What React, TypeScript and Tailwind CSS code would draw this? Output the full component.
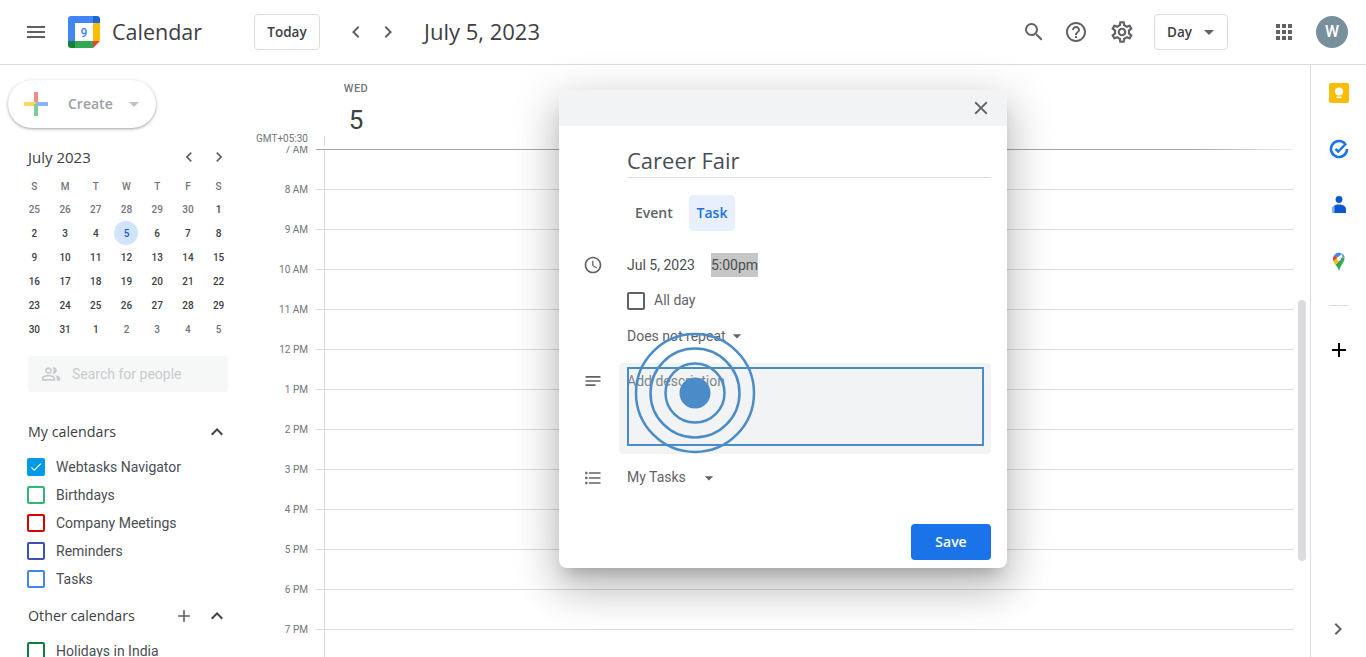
import {
  MdMenu,
  MdSearch,
  MdHelpOutline,
  MdOutlineSettings,
  MdApps,
  MdChevronLeft,
  MdChevronRight,
  MdClose,
  MdAccessTime,
  MdNotes,
  MdFormatListBulleted,
  MdOutlinePeopleAlt,
  MdExpandLess,
  MdAdd,
  MdArrowDropDown,
  MdCheck,
} from "react-icons/md";

const display = "font-['Open_Sans','Liberation_Sans',sans-serif]";

const weeks = [
  ["25", "26", "27", "28", "29", "30", "1"],
  ["2", "3", "4", "5", "6", "7", "8"],
  ["9", "10", "11", "12", "13", "14", "15"],
  ["16", "17", "18", "19", "20", "21", "22"],
  ["23", "24", "25", "26", "27", "28", "29"],
  ["30", "31", "1", "2", "3", "4", "5"],
];

const hours = ["7 AM", "8 AM", "9 AM", "10 AM", "11 AM", "12 PM", "1 PM", "2 PM", "3 PM", "4 PM", "5 PM", "6 PM", "7 PM"];

const myCalendars = [
  { name: "Webtasks Navigator", border: "border-[#039be5] bg-[#039be5]", checked: true },
  { name: "Birthdays", border: "border-[#33b679]", checked: false },
  { name: "Company Meetings", border: "border-[#d50000]", checked: false },
  { name: "Reminders", border: "border-[#3f51b5]", checked: false },
  { name: "Tasks", border: "border-[#4285f4]", checked: false },
];

function CalendarLogo() {
  return (
    <svg width="32" height="32" viewBox="0 0 32 32" className="shrink-0">
      <path d="M3 0H25V7H7V25H0V3a3 3 0 0 1 3-3z" fill="#4285f4" />
      <path d="M25 0h4a3 3 0 0 1 3 3v4h-7z" fill="#1967d2" />
      <rect x="25" y="7" width="7" height="18" fill="#fbbc04" />
      <rect x="7" y="25" width="18" height="7" fill="#34a853" />
      <path d="M0 25h7v7H3a3 3 0 0 1-3-3z" fill="#188038" />
      <path d="M25 25h7l-7 7z" fill="#ea4335" />
      <rect x="7" y="7" width="18" height="18" fill="#fff" />
      <text x="16" y="20.500" textAnchor="middle" fontSize="12" fontWeight="500" fill="#4285f4" fontFamily="Roboto, sans-serif">
        9
      </text>
    </svg>
  );
}

function Header() {
  return (
    <header className="flex h-[65px] items-center border-b border-[#dadce0] bg-white text-[#5f6368]">
      <MdMenu className="ml-6 shrink-0" size={24} />
      <div className="ml-5 shrink-0">
        <CalendarLogo />
      </div>
      <span className={`ml-3 w-[142px] text-[21.500px] text-[#3c4043] ${display}`}>Calendar</span>
      <button className={`flex h-9 w-[66px] items-center justify-center rounded border border-[#dadce0] text-[13.500px] font-semibold text-[#3c4043] ${display}`}>
        Today
      </button>
      <MdChevronLeft className="ml-6" size={24} />
      <MdChevronRight className="ml-2" size={24} />
      <span className={`ml-6 pb-[1px] text-[22px] text-[#3c4043] ${display}`}>July 5, 2023</span>
      <div className="ml-auto flex items-center">
        <MdSearch size={24} />
        <MdHelpOutline className="ml-[18px]" size={24} />
        <MdOutlineSettings className="ml-[21px]" size={26} />
        <button className={`ml-[19px] flex h-9 w-[74px] items-center rounded border border-[#dadce0] pl-3 text-[13.500px] font-semibold text-[#3c4043] ${display}`}>
          Day
          <MdArrowDropDown className="ml-[5px] text-[#5f6368]" size={24} />
        </button>
        <MdApps className="ml-11" size={24} />
        <div className="mr-[18px] ml-5 flex size-8 items-center justify-center rounded-full bg-[#78909c] text-base font-medium text-white">
          W
        </div>
      </div>
    </header>
  );
}

function CheckRow({ name, border, checked }: { name: string; border: string; checked: boolean }) {
  return (
    <div className="flex h-7 items-center pl-[27px]">
      <div className={`flex size-[18px] items-center justify-center rounded-[2px] border-2 ${border}`}>
        {checked && <MdCheck className="text-white" size={16} />}
      </div>
      <span className="ml-[11px] text-sm text-[#4a4e52]">{name}</span>
    </div>
  );
}

function Sidebar() {
  return (
    <aside className="w-[256px] shrink-0 overflow-hidden bg-white">
      <div className="mt-[15px] ml-2 flex h-12 w-[148px] items-center rounded-full bg-white shadow-[0_1px_2px_0_rgba(60,64,67,0.3),0_1px_3px_1px_rgba(60,64,67,0.15)]">
        <svg width="24" height="24" viewBox="0 0 24 24" className="ml-4 shrink-0">
          <rect x="10" y="0" width="4" height="12" fill="#f28b82" />
          <rect x="0" y="10" width="12" height="4" fill="#fdd663" />
          <rect x="12" y="10" width="12" height="4" fill="#8ab4f8" />
          <rect x="10" y="12" width="4" height="12" fill="#81c995" />
        </svg>
        <span className={`ml-5 w-[54px] pb-[1px] text-[14px] font-semibold text-[#9aa0a6] ${display}`}>Create</span>
        <MdArrowDropDown className="text-[#bdc1c6]" size={24} />
      </div>

      <div className="mt-[17px] flex h-6 items-center pr-[27px] pl-7 text-[#3c4043]">
        <span className={`text-[15px] ${display}`}>July 2023</span>
        <MdChevronLeft className="ml-auto text-[#5f6368]" size={20} />
        <MdChevronRight className="ml-[10px] text-[#5f6368]" size={20} />
      </div>

      <div className="mt-[6px] grid w-[234px] grid-cols-7 pl-[19px] text-center text-[10px] font-medium text-[#70757a]">
        {["S", "M", "T", "W", "T", "F", "S"].map((d, i) => (
          <div key={i} className="h-[22px] leading-[23px]">
            {d}
          </div>
        ))}
      </div>
      <div className="grid w-[234px] grid-cols-7 pl-[19px] text-center text-[10px] font-medium">
        {weeks.flat().map((d, i) => {
          const muted = i < 6 || i > 37;
          const today = i === 10;
          return (
            <div key={i} className="flex h-6 items-center justify-center">
              <span
                className={`flex size-6 items-center justify-center rounded-full ${
                  today ? "bg-[#d2e3fc] text-[#185abc]" : muted ? "text-[#70757a]" : "text-[#3c4043]"
                }`}
              >
                {d}
              </span>
            </div>
          );
        })}
      </div>

      <div className="mt-[15px] ml-7 flex h-9 w-[200px] items-center rounded bg-[#f6f8f8] pl-[13px]">
        <MdOutlinePeopleAlt className="text-[#c8cbce]" size={20} />
        <span className="ml-[11px] text-sm text-[#c8cbce]">Search for people</span>
      </div>

      <div className="mt-5 flex h-10 items-center pr-[27px] pl-7">
        <span className={`text-[14.250px] font-medium text-[#3c4043] ${display}`}>My calendars</span>
        <MdExpandLess className="ml-auto text-[#3c4043]" size={24} />
      </div>
      <div className="mt-[1px]">
        {myCalendars.map((c) => (
          <CheckRow key={c.name} {...c} />
        ))}
      </div>
      <div className="mt-[3px] flex h-10 items-center pr-[27px] pl-7">
        <span className={`text-[14.250px] font-medium text-[#3c4043] ${display}`}>Other calendars</span>
        <MdAdd className="ml-auto text-[#5f6368]" size={20} />
        <MdExpandLess className="ml-[11px] text-[#3c4043]" size={24} />
      </div>
      <div className="mt-[1px]">
        <CheckRow name="Holidays in India" border="border-[#0b8043]" checked={false} />
      </div>
    </aside>
  );
}

function TimeGrid() {
  return (
    <main className="flex min-w-0 flex-1 flex-col overflow-hidden bg-white">
      <div className="flex h-[81px] shrink-0">
        <div className="flex w-[68px] shrink-0 items-end justify-end pr-4">
          <span className="text-[10px] leading-[14px] whitespace-nowrap text-[#70757a]">GMT+05:30</span>
        </div>
        <div className="flex flex-1 flex-col justify-between border-[#dadce0]">
          <div className="w-[64px] pt-[17px] text-center">
            <div className="text-[11px] leading-[14px] font-medium tracking-[0.5px] text-[#70757a]">WED</div>
            <div className="mt-[8px] text-[26px] leading-[32px] text-[#3c4043]">5</div>
          </div>
          <div className="h-4 border-l border-[#dadce0]" />
        </div>
      </div>
      <div className="flex flex-1 overflow-hidden">
        <div className="flex-1 pt-[3px]">
          {hours.map((h, i) => (
            <div key={h} className="flex h-10">
              <div className="flex h-px w-[52px] shrink-0 items-center justify-end">
                <span className="text-[10px] whitespace-nowrap text-[#70757a]">{h}</span>
              </div>
              <div className="flex h-10 flex-1 pl-2">
                <div className="flex h-10 flex-1 flex-col">
                  {i === 0 ? (
                    <div className="h-px bg-linear-to-r from-[#a6a6a6] from-90% to-[#f1f1f1]" />
                  ) : (
                    <div className="h-px bg-[#dadce0]" />
                  )}
                  <div className="ml-2 flex-1 border-l border-[#dadce0]" />
                </div>
              </div>
            </div>
          ))}
        </div>
        <div className="w-4 shrink-0 px-1 pt-[154px]">
          <div className="h-[261px] rounded-full bg-[#dadce0]" />
        </div>
      </div>
    </main>
  );
}

function SidePanel() {
  return (
    <aside className="flex w-[56px] shrink-0 flex-col items-center border-l border-[#dadce0] bg-white">
      <svg width="20" height="20" viewBox="0 0 20 20" className="mt-[18px] shrink-0">
        <rect width="20" height="20" rx="2" fill="#fbbc04" />
        <circle cx="10" cy="8.500" r="4" fill="#fff" />
        <rect x="7.500" y="13.500" width="5" height="1.600" fill="#fff" />
      </svg>
      <svg width="20" height="20" viewBox="0 0 20 20" className="mt-9 shrink-0">
        <path d="M16 4.700A8 8 0 1 0 18 10" fill="none" stroke="#1a73e8" strokeWidth="2.600" />
        <path d="M6.500 9.800l2.700 2.700 8-8" fill="none" stroke="#1a73e8" strokeWidth="2.400" />
      </svg>
      <svg width="20" height="20" viewBox="0 0 20 20" className="mt-9 shrink-0">
        <circle cx="10" cy="4.500" r="3.400" fill="#0b57d0" />
        <path d="M3 17v-2.500C3 11 6 9.500 10 9.500s7 1.500 7 5V17c0 .6-.4 1-1 1H4c-.6 0-1-.4-1-1z" fill="#0b57d0" />
        <path d="M3 17v-2.500C3 12.500 4 11 5.500 10.400V18H4c-.6 0-1-.4-1-1z" fill="#8ab4f8" />
      </svg>
      <svg width="20" height="20" viewBox="0 0 20 20" className="mt-9 shrink-0">
        <path d="M10 20c-1-3-2-4.500-3.500-6.300L10 10l3.600-4.200 1.800 1.500c.6 3-3.700 6.500-5.400 12.700z" fill="#34a853" />
        <path d="M6.500 13.700C5.700 12.700 4.800 11.400 4.400 10L8 7.200 10 10z" fill="#fbbc04" />
        <path d="M4.400 10C4.200 9.300 4 8.600 4 7.800 4 6.300 4.500 5 5.400 3.900L8.500 6.800z" fill="#ea4335" />
        <path d="M5.400 3.900C6.500 2.600 8.100 1.800 10 1.800c1.100 0 2.100.3 3 .8L8.500 6.800z" fill="#4285f4" />
        <path d="M13 2.600c1.500.9 2.500 2.400 2.900 4.100L13.600 5.800z" fill="#4285f4" />
        <circle cx="10" cy="7.800" r="2" fill="#fff" />
      </svg>
      <div className="mt-[34px] h-px w-5 bg-[#dadce0]" />
      <MdAdd className="mt-[32px] text-black" size={24} />
      <MdChevronRight className="mt-auto mr-[1px] mb-4 text-[#5f6368]" size={24} />
    </aside>
  );
}

function TaskDialog() {
  return (
    <div className="absolute top-[90px] left-[559px] w-[448px] overflow-hidden rounded-lg bg-white shadow-[0_24px_38px_3px_rgba(0,0,0,0.14),0_9px_46px_8px_rgba(0,0,0,0.12),0_11px_15px_-7px_rgba(0,0,0,0.2)]">
      <div className="flex h-9 items-center justify-end bg-[#f1f3f4] pr-[15px] text-[#5f6368]">
        <MdClose size={22} />
      </div>
      <div className="relative pr-4 pb-2 text-[#4a4e52]">
        <div className="ml-[68px] flex h-[52px] items-end border-b border-[#dadce0]">
          <span className={`text-[22px] leading-[34px] ${display}`}>Career Fair</span>
        </div>
        <div className={`mt-[17px] ml-[68px] flex h-9 text-[14px] font-semibold ${display}`}>
          <span className="flex w-[62px] items-center pb-[2px] pl-2 text-[#5f6368]">Event</span>
          <span className="flex w-[46px] items-center justify-center rounded bg-[#e8f0fe] pb-[2px] text-[#1a73e8]">Task</span>
        </div>
        <div className="mt-[22px] flex h-6 items-center text-sm">
          <MdAccessTime className="ml-6 text-[#5f6368]" size={20} />
          <span className="ml-6">Jul 5, 2023</span>
          <span className="ml-4 flex h-6 w-[47px] items-center bg-[#c6c6c6]">5:00pm</span>
        </div>
        <div className="mt-[15px] ml-[68px] flex h-[18px] items-center text-sm text-[#5f6368]">
          <div className="size-[18px] rounded-[2px] border-2 border-[#5f6368]" />
          <span className="ml-[9px] pb-[2px]">All day</span>
        </div>
        <div className="mt-4 ml-[68px] flex h-5 items-center text-sm text-[#5f6368]">
          Does not repeat
          <MdArrowDropDown className="ml-[1px]" size={20} />
        </div>
        <div className="mt-[17px] flex">
          <MdNotes className="mt-2 ml-6 text-[#5f6368]" size={20} />
          <div className="ml-4 h-[91px] flex-1 rounded bg-[#f1f3f4] px-2 pt-2 text-sm text-[#80868b]">Add description</div>
        </div>
        <div className="mt-3 flex h-6 items-center text-sm">
          <MdFormatListBulleted className="ml-6 text-[#5f6368]" size={20} />
          <span className="ml-6 pb-[2px] text-[#5f6368]">My Tasks</span>
          <MdArrowDropDown className="ml-[13px] text-[#5f6368]" size={20} />
        </div>
        <div className="mt-[34px] flex justify-end">
          <button className={`h-9 w-20 rounded bg-[#1a73e8] pb-[2px] text-[14px] font-semibold text-white ${display}`}>Save</button>
        </div>
      </div>
    </div>
  );
}

function ClickMarker() {
  return (
    <>
      <div className="absolute top-[367px] left-[627px] h-[79px] w-[357px] border-2 border-[#4a8cc7]" />
      <svg width="124" height="124" viewBox="0 0 124 124" className="absolute top-[331px] left-[633px]">
        <circle cx="62" cy="62" r="15.500" fill="#4a8cc7" />
        <circle cx="62" cy="62" r="29.500" fill="none" stroke="#4a8cc7" strokeWidth="2.500" />
        <circle cx="62" cy="62" r="44.500" fill="none" stroke="#4a8cc7" strokeWidth="2.500" />
        <circle cx="62" cy="62" r="59" fill="none" stroke="#4a8cc7" strokeWidth="2.500" />
      </svg>
    </>
  );
}

export default function App() {
  return (
    <div className="relative flex h-[657px] flex-col overflow-hidden bg-white font-['Roboto','Liberation_Sans',sans-serif]">
      <Header />
      <div className="flex min-h-0 flex-1">
        <Sidebar />
        <TimeGrid />
        <SidePanel />
      </div>
      <TaskDialog />
      <ClickMarker />
    </div>
  );
}
